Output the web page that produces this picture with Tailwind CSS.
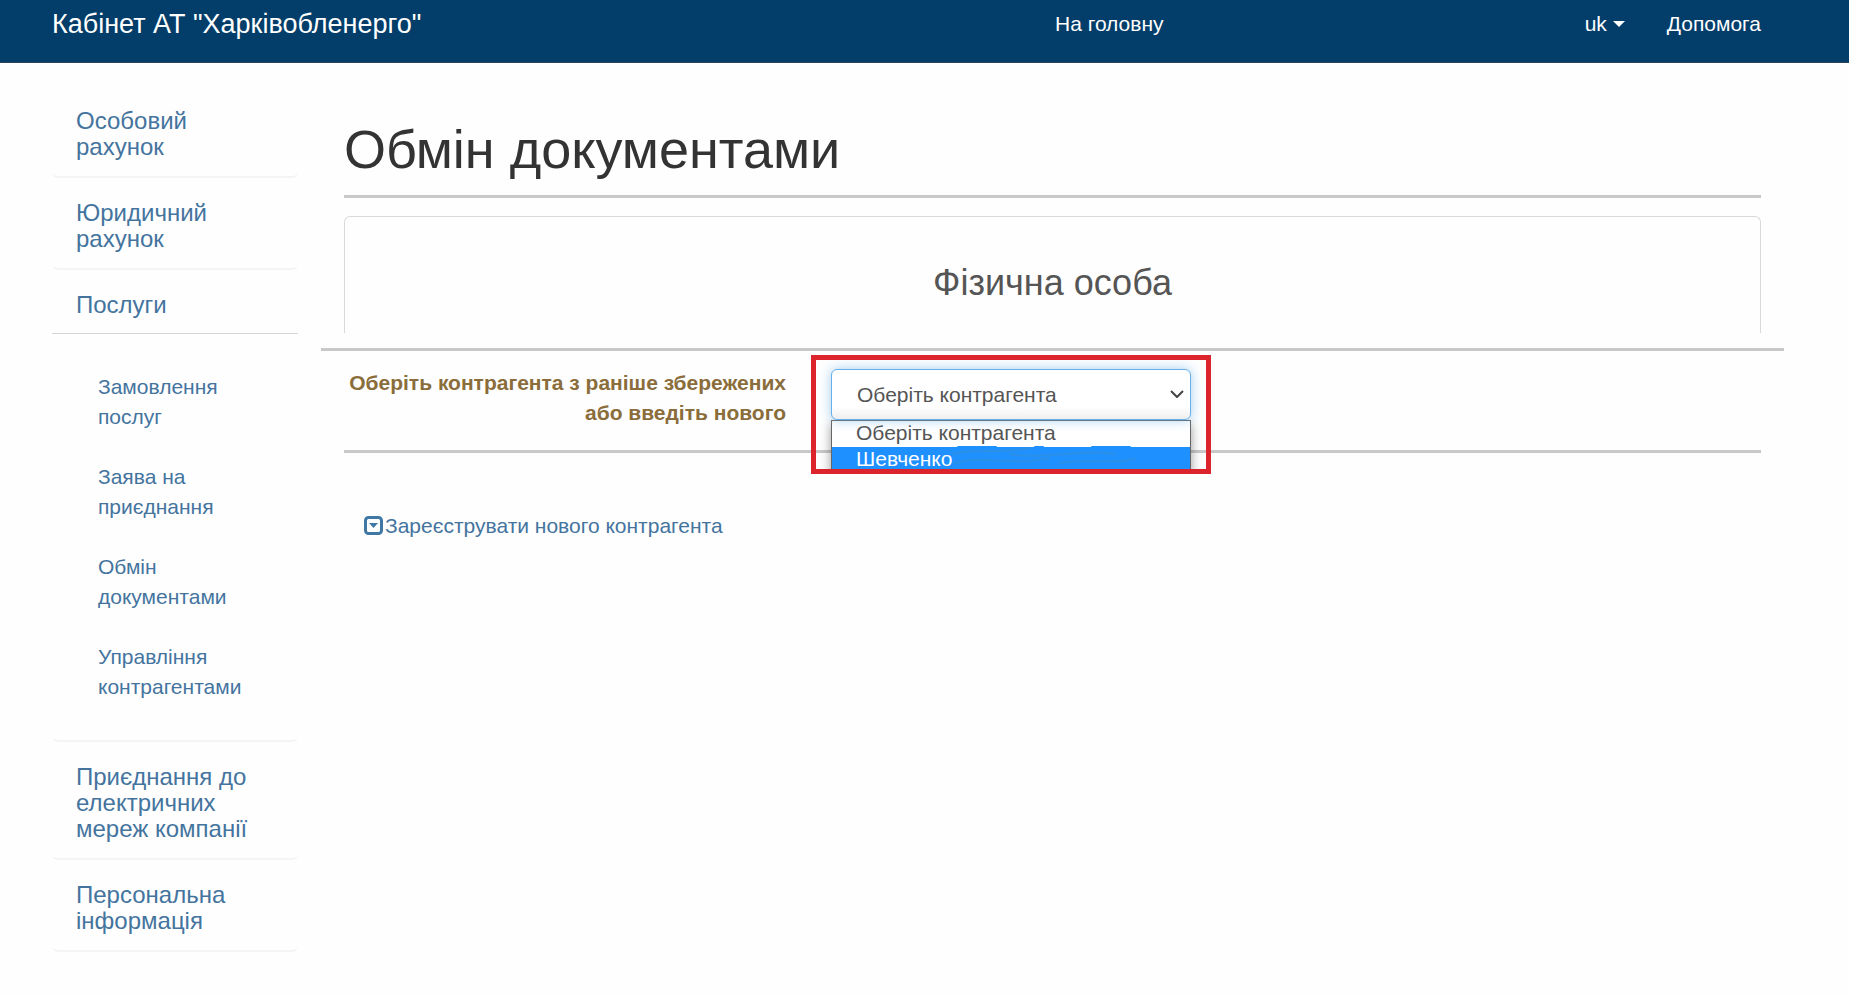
<!DOCTYPE html>
<html lang="uk">
<head>
<meta charset="utf-8">
<title>Обмін документами</title>
<script src="https://cdn.jsdelivr.net/npm/@tailwindcss/browser@4"></script>
</head>
<body class="bg-[#fefefe] font-['Liberation_Sans',Arial,sans-serif] text-[21px] leading-[30px] text-[#333]">
<header class="flex h-[63px] items-start border-b border-[#2b4558] bg-[#033d69] pt-2 pr-[88px] pl-[52px] text-white">
  <a href="#" class="flex-1 text-[27px] leading-[32px]">Кабінет АТ "Харківобленерго"</a>
  <nav class="flex w-[706px] items-center leading-[32px]">
    <a href="#" class="mr-auto">На головну</a>
    <button type="button" class="mr-[42px] flex items-center gap-[6px]">uk
      <svg class="h-[6px] w-3" viewBox="0 0 12 6" fill="currentColor" aria-hidden="true"><path d="M0 0h12L6 6z"/></svg>
    </button>
    <a href="#">Допомога</a>
  </nav>
</header>

<div class="flex items-start gap-[46px] pr-[88px] pl-[52px]">
  <aside class="mt-[30px] flex w-[246px] shrink-0 flex-col gap-[7px] text-[#44749e]">
    <section class="rounded-md border-b-2 border-[#f4f4f4] px-6 pt-[15px] pb-4">
      <h4 class="text-2xl leading-[26px]"><a href="#">Особовий<br>рахунок</a></h4>
    </section>
    <section class="rounded-md border-b-2 border-[#f4f4f4] px-6 pt-[15px] pb-4">
      <h4 class="text-2xl leading-[26px]"><a href="#">Юридичний<br>рахунок</a></h4>
    </section>
    <section class="rounded-md border-b-2 border-[#f4f4f4]">
      <h4 class="border-b border-[#d6d6d6] px-6 pt-[15px] pb-[15px] text-2xl leading-[26px]"><a href="#">Послуги</a></h4>
      <ul class="flex flex-col gap-[30px] px-[46px] py-[38px]">
        <li><a href="#">Замовлення<br>послуг</a></li>
        <li><a href="#">Заява на<br>приєднання</a></li>
        <li><a href="#">Обмін<br>документами</a></li>
        <li><a href="#">Управління<br>контрагентами</a></li>
      </ul>
    </section>
    <section class="rounded-md border-b-2 border-[#f4f4f4] px-6 pt-[15px] pb-4">
      <h4 class="text-2xl leading-[26px]"><a href="#">Приєднання до<br>електричних<br>мереж компанії</a></h4>
    </section>
    <section class="rounded-md border-b-2 border-[#f4f4f4] px-6 pt-[15px] pb-4">
      <h4 class="text-2xl leading-[26px]"><a href="#">Персональна<br>інформація</a></h4>
    </section>
  </aside>

  <main class="min-w-0 flex-1 pt-14">
    <h1 class="pb-4 text-[54px] leading-[60px]">Обмін документами</h1>
    <hr class="border-t-[3px] border-[#c8c8c8]">
    <div class="mt-[18px] h-[117px] rounded-t-md border border-b-0 border-[#d9d9d9] pt-[46px] text-center">
      <h3 class="text-4xl leading-[40px] text-[#555]">Фізична особа</h3>
    </div>
    <hr class="-mx-[23px] mt-[15px] border-t-[3px] border-[#c8c8c8]">
    <form class="flex h-[99px] items-start">
      <label for="agent" class="w-[442px] pt-[17px] text-right font-bold text-[#8a6d3b]">Оберіть контрагента з раніше збережених або введіть нового</label>
      <div class="relative z-10 mt-1 ml-[25px] h-[119px] w-[400px] shrink-0 overflow-hidden border-5 border-[#dc242c] px-[15px] pt-[9px]">
        <div class="relative">
          <select id="agent" class="block h-[51px] w-full appearance-none rounded-md border border-[#66afe9] bg-white bg-linear-to-b from-white from-75% to-[#eee] pl-[25px] text-[#555] shadow-[0_0_12px_rgba(102,175,233,.6)] outline-none">
            <option>Оберіть контрагента</option>
            <option>Шевченко</option>
          </select>
          <svg class="pointer-events-none absolute top-[21px] right-[7px] h-2 w-[14px]" viewBox="0 0 14 8" fill="none" stroke="#444" stroke-width="2" aria-hidden="true"><path d="M1 1l6 6 6-6"/></svg>
        </div>
        <ul class="border border-[#666] bg-white text-[#555] shadow-[0_4px_10px_rgba(0,0,0,.4)]">
          <li class="h-[26px] pl-6 leading-[24px]">Оберіть контрагента</li>
          <li class="relative h-[26px] bg-[#1e90ff] pl-6 leading-[24px] text-white">Шевченко
            <svg class="absolute -top-px left-[118px] h-[24px] w-[200px]" viewBox="0 0 200 24" fill="none" stroke="#3a8fd0" stroke-width="2" stroke-linecap="round" aria-hidden="true"><path d="M3 8C30 1 50 9 80 2M5 17c30-9 60 4 95-5M60 8c30 6 70-5 105 0M110 17c25-5 50 2 75-4" opacity=".5"/><path d="M8 1h38M85 1h8M142 1h38" stroke="#1e90ff"/></svg>
          </li>
        </ul>
      </div>
    </form>
    <hr class="border-t-[3px] border-[#c8c8c8]">
    <a href="#" class="mt-[58px] ml-5 inline-flex items-start gap-[2px] text-[#44749e]">
      <svg class="mt-[5px] h-[19px] w-[19px]" viewBox="0 0 19 19" aria-hidden="true"><rect x="1.500" y="1.500" width="16" height="16" rx="3" fill="none" stroke="#3f78a5" stroke-width="3"/><path d="M5 7h9l-4.500 5z" fill="#3f78a5"/></svg>
      Зареєструвати нового контрагента</a>
  </main>
</div>
</body>
</html>
